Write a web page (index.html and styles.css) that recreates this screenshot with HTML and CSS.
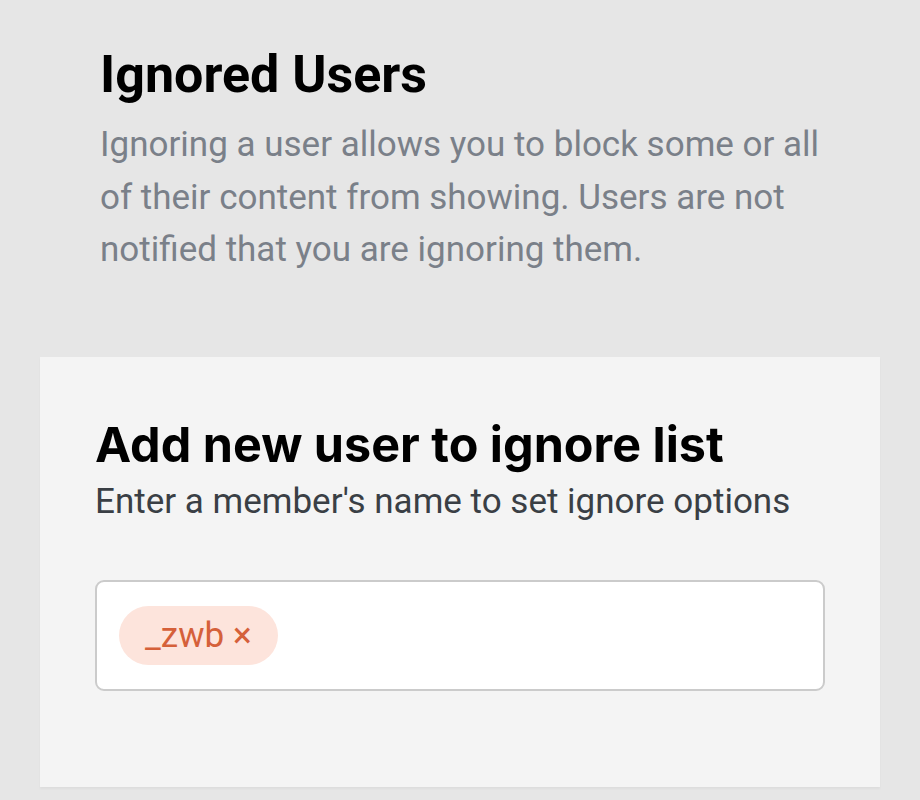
FILE: index.html
```html
<!DOCTYPE html>
<html lang="en">
<head>
<meta charset="utf-8">
<title>Ignored Users</title>
<link rel="stylesheet" href="styles.css">
</head>
<body>
<main class="page">
  <header class="intro">
    <h1 class="intro-title">Ignored Users</h1>
    <p class="intro-text">Ignoring a user allows you to block some or all of their content from showing. Users are not notified that you are ignoring them.</p>
  </header>
  <section class="card">
    <h2 class="card-title">Add new user to ignore list</h2>
    <p class="card-sub">Enter a member's name to set ignore options</p>
    <div class="field">
      <span class="chip">_zwb <span class="chip-x">×</span></span>
    </div>
  </section>
</main>
</body>
</html>
```
FILE: styles.css
```css
html, body {
  margin: 0;
  padding: 0;
}
body {
  background: #e6e6e6;
  font-family: Roboto, "Liberation Sans", sans-serif;
  width: 920px;
  height: 800px;
  overflow: hidden;
}
.page {
  display: flex;
  flex-direction: column;
}
.intro {
  padding: 45px 80px 0 100px;
}
.intro-title {
  margin: 0;
  font-family: Roboto, sans-serif;
  font-weight: 700;
  font-size: 52px;
  line-height: 60px;
  color: #000;
}
.intro-text {
  margin: 14px 0 0;
  font-size: 35px;
  line-height: 52.5px;
  color: #7a8089;
}
.card {
  margin: 80px 40px 0;
  background: #f4f4f4;
  padding: 60px 55px 96px;
  box-shadow: 0 2px 2px rgba(0,0,0,0.04);
}
.card-title {
  margin: 0;
  font-family: Inter, sans-serif;
  font-weight: 700;
  font-size: 48.5px;
  line-height: 56px;
  color: #000;
}
.card-sub {
  margin: 5px 0 0;
  font-size: 35px;
  line-height: 48px;
  color: #3a3f45;
}
.field {
  margin-top: 54px;
  box-sizing: border-box;
  height: 111px;
  border: 2px solid #cbcbcb;
  border-radius: 9px;
  background: #fff;
  display: flex;
  align-items: center;
  padding: 0 22px;
}
.chip {
  display: inline-flex;
  align-items: center;
  gap: 9px;
  height: 59px;
  padding: 0 26px;
  border-radius: 30px;
  background: #fde4dc;
  color: #d5603a;
  font-size: 35px;
}
.chip-x {
  font-size: 35px;
}
```
